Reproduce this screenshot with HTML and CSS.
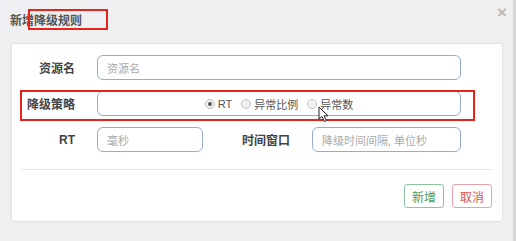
FILE: index.html
```html
<!DOCTYPE html>
<html lang="zh-CN">
<head>
    <meta charset="UTF-8">
    <title>新增降级规则</title>
    <link rel="stylesheet" href="styles.css">
</head>
<body>

<div class="modal">
    <div class="modal-header">
        <h4>新增降级规则</h4>
        <span class="close">&times;</span>
    </div>

    <div class="modal-body">
        <div class="form-row">
            <label>资源名</label>
            <div class="input wide"><span class="ph">资源名</span></div>
        </div>
        <div class="form-row">
            <label>降级策略</label>
            <div class="input wide radios">
                <span class="radio checked"></span><span class="opt">RT</span>
                <span class="radio"></span><span class="opt">异常比例</span>
                <span class="radio"></span><span class="opt">异常数</span>
            </div>
        </div>
        <div class="form-row">
            <label>RT</label>
            <div class="input short"><span class="ph">毫秒</span></div>
            <label class="label-mid">时间窗口</label>
            <div class="input medium"><span class="ph">降级时间间隔, 单位秒</span></div>
        </div>

        <div class="modal-footer">
            <button class="btn btn-green">新增</button>
            <button class="btn btn-red">取消</button>
        </div>
    </div>
</div>

<!-- annotation boxes and mouse pointer drawn over the dialog -->
<div class="mark mark-title"></div>
<div class="mark mark-row"></div>
<svg class="cursor" width="12" height="17" viewBox="0 0 12 17">
    <path d="M1 1 L1 13 L4 10.5 L6.3 15.5 L8.3 14.6 L6.1 9.8 L10 9.8 Z" fill="#fff" stroke="#222" stroke-width="1"/>
</svg>

</body>
</html>
```

FILE: styles.css
```css
body {
    margin: 0;
    padding: 0;
    background-color: #efeef0;
    font-family: "Liberation Sans", Arial, "Noto Sans CJK SC", sans-serif;
    font-size: 12px;
    color: #333;
    width: 516px;
    height: 241px;
    overflow: hidden;
    position: relative;
}
.modal {
    width: 513px;
    height: 241px;
    border-right: 3px solid #d8d7da;
}
.modal-header {
    position: relative;
    height: 43px;
}
.modal-header h4 {
    margin: 0;
    padding: 13px 0 0 10px;
    font-size: 12px;
    font-weight: bold;
    color: #555;
    line-height: 16px;
}
.close {
    position: absolute;
    right: 6px;
    top: 3px;
    font-size: 17px;
    color: #b9b9b9;
    font-weight: bold;
}
.modal-body {
    margin-left: 11px;
    width: 490px;
    height: 166px;
    background: white;
    border: 1px solid #e2e2e4;
    border-radius: 3px;
    padding-top: 11px;
}
.form-row {
    display: flex;
    align-items: center;
    height: 25px;
    margin-bottom: 11px;
}
.form-row label {
    width: 63px;
    text-align: right;
    font-weight: bold;
    color: #444;
    margin-right: 22px;
}
.form-row .label-mid {
    width: 87px;
    margin-right: 22px;
}
.input {
    height: 25px;
    box-sizing: border-box;
    border: 1px solid #97acc9;
    border-radius: 6px;
    display: flex;
    align-items: center;
    padding-left: 9px;
}
.wide {
    width: 364px;
}
.short {
    width: 106px;
}
.medium {
    width: 149px;
}
.ph {
    color: #aaa;
    font-size: 11px;
}
.radios {
    justify-content: center;
    padding-left: 0;
}
.radio {
    width: 8px;
    height: 8px;
    border: 1px solid #c4c4c4;
    border-radius: 50%;
    background: #f1f1f1;
    margin-right: 3px;
    position: relative;
}
.radio.checked::after {
    content: "";
    position: absolute;
    left: 2px;
    top: 2px;
    width: 4px;
    height: 4px;
    border-radius: 50%;
    background: #555;
}
.opt {
    color: #555;
    font-size: 11px;
    margin-right: 9px;
}
.opt:last-child {
    margin-right: 0;
}
.modal-footer {
    margin: 17px 10px 0 10px;
    border-top: 1px solid #e8e8e8;
    padding-top: 14px;
    display: flex;
    justify-content: flex-end;
    gap: 8px;
}
.btn {
    width: 40px;
    height: 24px;
    padding: 0;
    background: white;
    border-radius: 3px;
    font-size: 12px;
    font-family: inherit;
}
.btn-green {
    border: 1px solid #8fc3a0;
    color: #4a9a63;
}
.btn-red {
    border: 1px solid #eaa0a4;
    color: #d9534f;
}
.mark {
    position: absolute;
    border: 2px solid #e8231c;
}
.mark-title {
    left: 28px;
    top: 9px;
    width: 76px;
    height: 17px;
}
.mark-row {
    left: 20px;
    top: 90px;
    width: 451px;
    height: 27px;
}
.cursor {
    position: absolute;
    left: 318px;
    top: 106px;
}
```
